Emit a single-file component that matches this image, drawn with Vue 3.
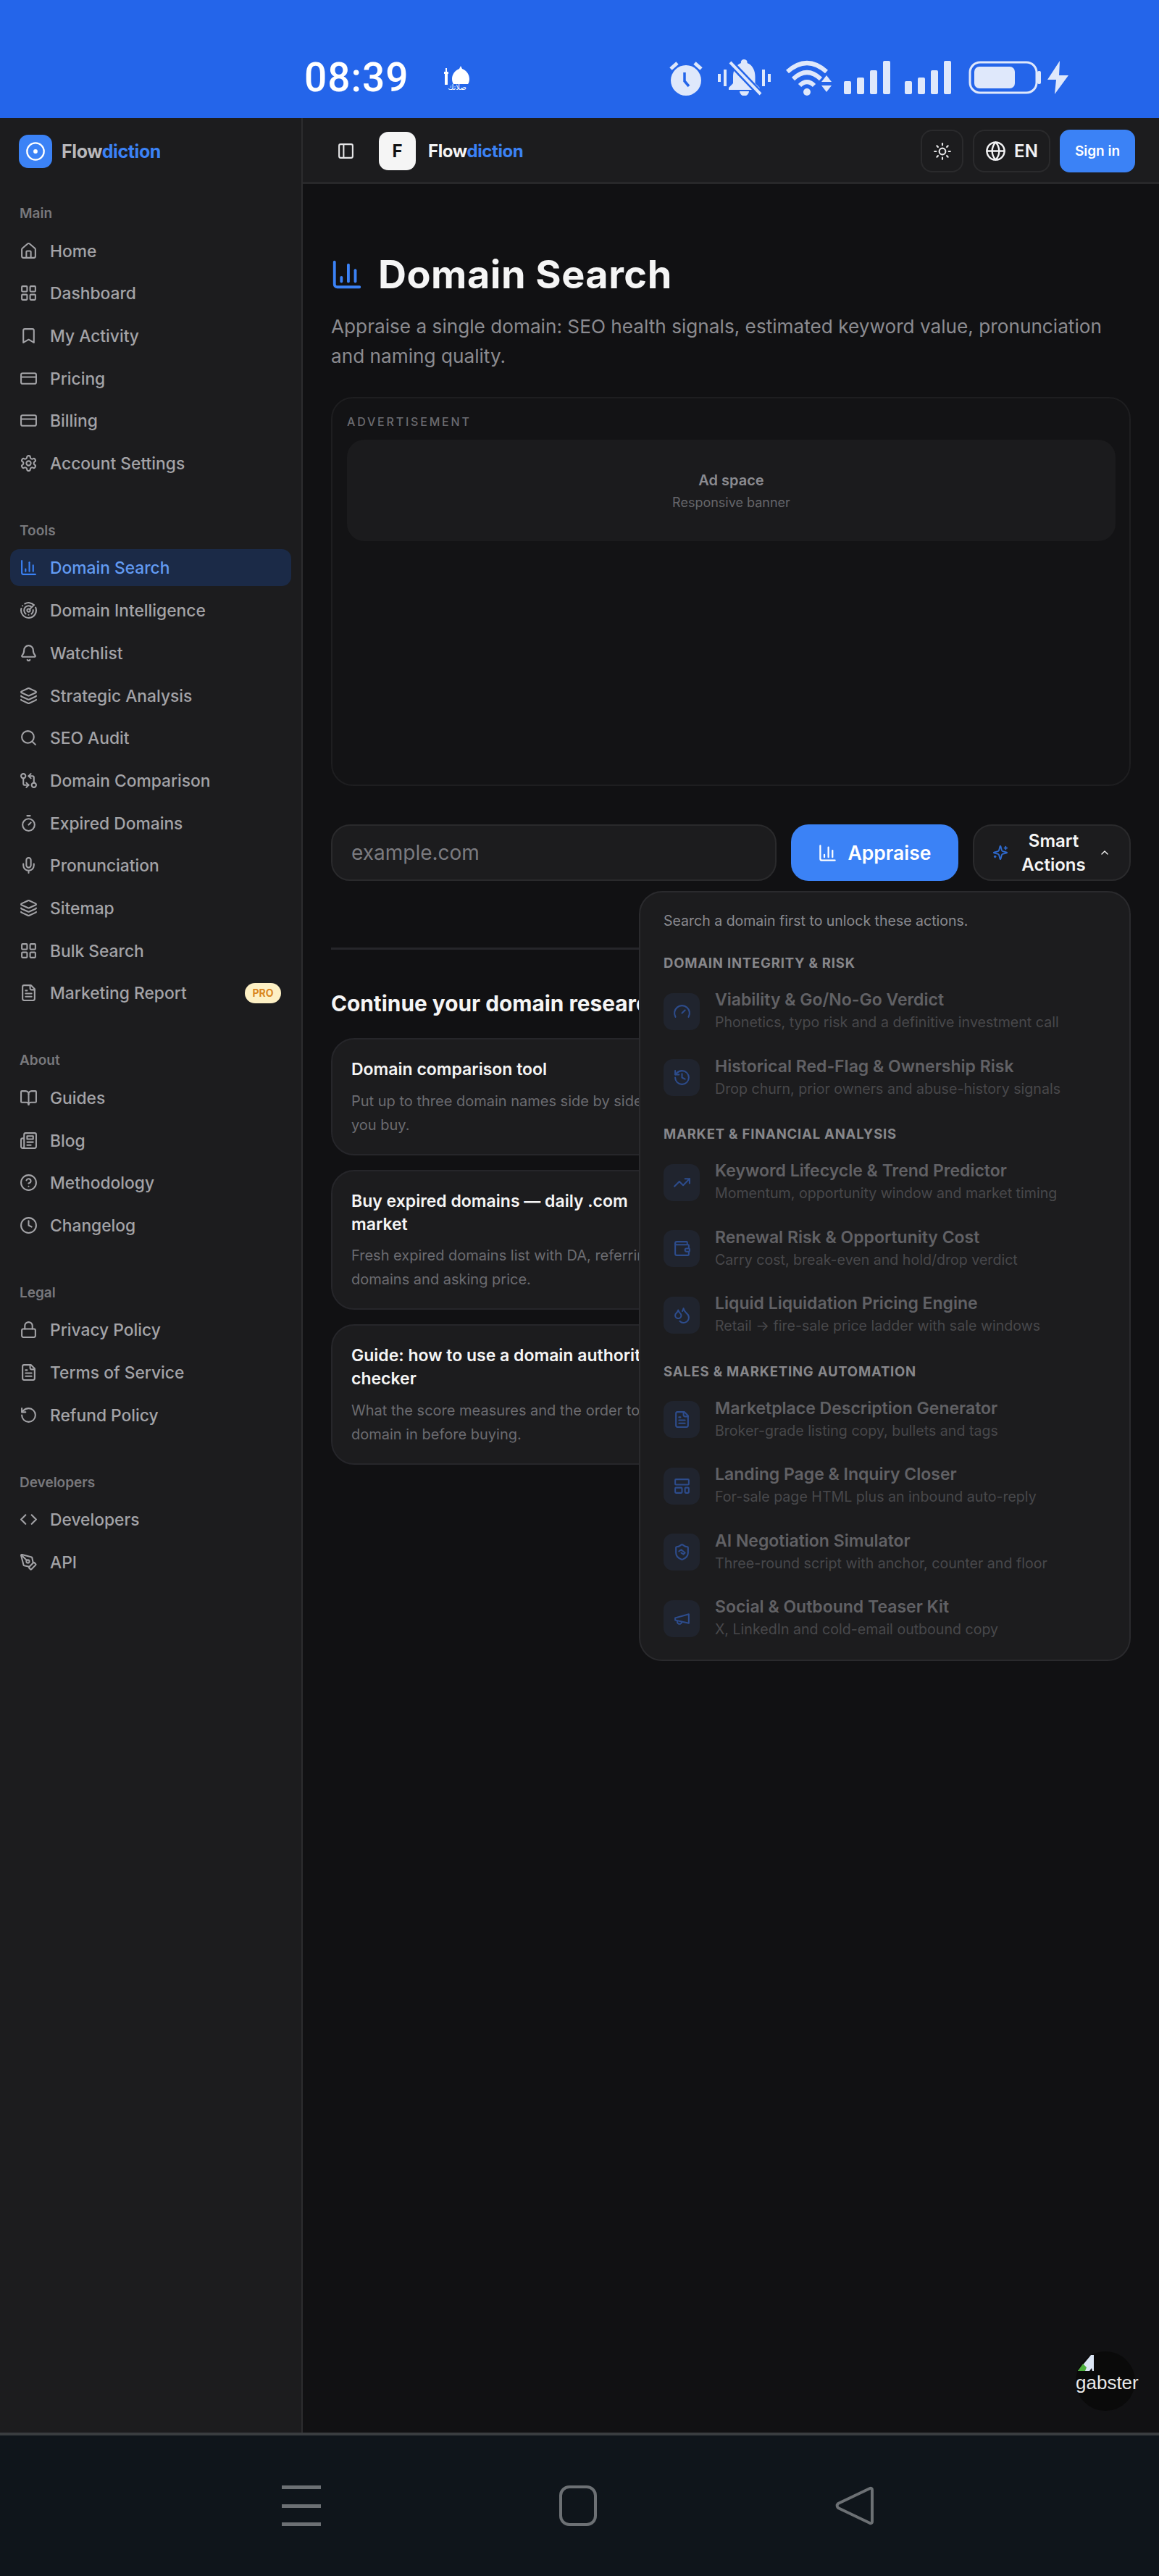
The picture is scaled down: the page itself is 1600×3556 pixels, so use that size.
<template>
  <div class="phone">
    <!-- android status bar -->
    <header class="statusbar">
      <span class="clock">08:39</span>
      <div class="mosque">
        <svg width="38" height="28" viewBox="0 0 38 28" fill="#fff">
          <path d="M4 0a3 3 0 0 0 1 5 3 3 0 0 1-1-5zM3 5h2v5h2v3H6v15H2V13H1v-3h2z" />
          <path d="M24 2l2 4c6 2 10 8 10 14 0 3-1 6-2 7H14c-1-1-2-4-2-7 0-6 4-12 10-14z" />
        </svg>
        <span class="mosque-text">صلاتك</span>
      </div>

      <div class="status-icons">
        <svg width="48" height="50" viewBox="0 0 48 50">
          <path d="M3 13l9-8M45 13l-9-8" stroke="#dfe8fb" stroke-width="5" />
          <circle cx="24" cy="29" r="21" fill="#dfe8fb" />
          <path d="M22 18v12l6 7" stroke="#2465ea" stroke-width="3.500" fill="none" />
        </svg>
        <svg width="73" height="50" viewBox="0 0 73 50" fill="#dfe8fb">
          <rect x="0" y="20" width="4" height="11" />
          <rect x="8" y="14" width="4" height="23" />
          <rect x="61" y="14" width="4" height="23" />
          <rect x="69" y="20" width="4" height="11" />
          <path d="M36.500 0a4 4 0 0 1 4 5c8 3 11 11 11 19v9l6 6v3H15v-3l6-6v-9c0-8 3-16 11-19a4 4 0 0 1 4.500-5z" />
          <path d="M30 44h13a6.500 6.500 0 0 1-13 0z" />
          <path d="M17 4l42 44" stroke="#2465ea" stroke-width="9" />
          <path d="M17 4l42 44" stroke="#dfe8fb" stroke-width="4" />
        </svg>
        <svg width="67" height="50" viewBox="0 0 67 50" fill="none">
          <g stroke="#dfe8fb" stroke-width="6">
            <path d="M3 17Q30 -7 57 17" />
            <path d="M11 27Q30 9 49 27" />
            <path d="M20 36Q30 26 40 36" />
          </g>
          <g fill="#dfe8fb">
            <circle cx="30" cy="45" r="5" />
            <path d="M50 31l7-9 7 9zM50 36h14l-7 9z" />
          </g>
        </svg>
        <svg v-for="n in 2" :key="n" :class="'signal-' + n" width="64" height="46" viewBox="0 0 64 46" fill="#dfe8fb">
          <rect x="0" y="28" width="10" height="18" rx="2" />
          <rect x="18" y="23" width="10" height="23" rx="2" />
          <rect x="36" y="13" width="10" height="33" rx="2" />
          <rect x="54" y="0" width="10" height="46" rx="2" />
        </svg>
        <svg class="battery" width="100" height="46" viewBox="0 0 100 46">
          <rect x="2" y="2" width="92" height="42" rx="14" fill="none" stroke="#dfe8fb" stroke-width="3" />
          <rect x="8" y="8" width="56" height="30" rx="7" fill="#dfe8fb" />
          <rect x="95" y="14" width="5" height="18" rx="2" fill="#dfe8fb" />
        </svg>
        <svg class="bolt" width="29" height="46" viewBox="0 0 29 46" fill="#dfe8fb">
          <path d="M17 0L0 26h12l-2 20 19-26H16z" />
        </svg>
      </div>
    </header>

    <div class="app">
      <aside class="sidebar">
        <div class="brand">
          <span class="brand-logo">
            <svg width="28" height="28" viewBox="0 0 24 24" fill="none" stroke="#fff" stroke-width="2">
              <circle cx="12" cy="12" r="10" />
              <circle cx="12" cy="12" r="1.500" fill="#fff" />
            </svg>
          </span>
          <span class="brand-name"><b>Flow</b><em>diction</em></span>
        </div>

        <section v-for="sec in navSections" :key="sec.label" class="nav-section">
          <div class="nav-label">{{ sec.label }}</div>
          <a
            v-for="item in sec.items"
            :key="item.text"
            class="nav-row"
            :class="{ active: item.active }"
          >
            <Icon :name="item.icon" :size="25" class="nav-icon" />
            <span>{{ item.text }}</span>
            <span v-if="item.pro" class="pro">PRO</span>
          </a>
        </section>
      </aside>

      <div class="content">
        <div class="topbar">
          <Icon name="panel" :size="25" class="panel-btn" />
          <span class="f-logo">F</span>
          <span class="topbar-name"><b>Flow</b><em>diction</em></span>
          <div class="topbar-right">
            <button class="ghost square"><Icon name="sun" :size="26" /></button>
            <button class="ghost lang"><Icon name="globe" :size="29" /><span>EN</span></button>
            <button class="signin">Sign in</button>
          </div>
        </div>

        <main class="page">
          <div class="title-row">
            <Icon name="chart" :size="46" class="title-icon" />
            <h1>Domain Search</h1>
          </div>
          <p class="lead">
            Appraise a single domain: SEO health signals, estimated keyword value, pronunciation and naming quality.
          </p>

          <div class="ad">
            <div class="ad-label">ADVERTISEMENT</div>
            <div class="ad-slot">
              <strong>Ad space</strong>
              <span>Responsive banner</span>
            </div>
          </div>

          <div class="search-row">
            <div class="input">example.com</div>
            <button class="appraise"><Icon name="chart" :size="27" />Appraise</button>
            <div class="smart-wrap">
              <button class="smart">
                <Icon name="sparkles" :size="22" class="smart-icon" />
                <span class="smart-label">Smart Actions</span>
                <Icon name="chevron" :size="16" class="smart-chev" />
              </button>

              <!-- dropdown stays open over the related cards -->
              <div class="dropdown">
                <p class="dd-intro">Search a domain first to unlock these actions.</p>
                <div v-for="group in actionGroups" :key="group.title" class="dd-group">
                  <div class="dd-head">{{ group.title }}</div>
                  <div v-for="a in group.items" :key="a.title" class="dd-item">
                    <span class="dd-tile"><Icon :name="a.icon" :size="25" /></span>
                    <div class="dd-text">
                      <div class="dd-title">{{ a.title }}</div>
                      <div class="dd-sub">{{ a.sub }}</div>
                    </div>
                  </div>
                </div>
              </div>
            </div>
          </div>

          <div class="divider"></div>

          <h2>Continue your domain research</h2>
          <div class="cards">
            <article v-for="c in related" :key="c.title" class="card">
              <h3>{{ c.title }}</h3>
              <p>{{ c.text }}</p>
            </article>
          </div>
        </main>
      </div>

      <!-- floating chat bubble, its image is broken in the reference -->
      <div class="gabster">
        <svg class="broken" width="24" height="24" viewBox="0 0 24 24">
          <path d="M1 23L19 1h4v22z" fill="#dce6f5" />
          <path d="M1 23l7-10 5 5-2 5z" fill="#4caf3c" />
          <path d="M17 23l3-4 1 4z" fill="#0a0a0a" />
        </svg>
        <span>gabster</span>
      </div>
    </div>

    <footer class="navbar">
      <div class="nav-menu"><i></i><i></i><i></i></div>
      <div class="nav-home"></div>
      <svg width="54" height="56" viewBox="0 0 54 56" fill="none">
        <path d="M48 4a2 2 0 0 1 3 2v44a2 2 0 0 1-3 2L4 31a4 4 0 0 1 0-6z" stroke="#6c7074" stroke-width="4" stroke-linejoin="round" />
      </svg>
    </footer>
  </div>
</template>

<script setup>
import { h } from "vue";

const circle = (cx, cy, r) => `M${cx - r} ${cy}a${r} ${r} 0 1 0 ${2 * r} 0a${r} ${r} 0 1 0 ${-2 * r} 0`;
const box = (x, y, w, h2, r) =>
  `M${x + r} ${y}h${w - 2 * r}a${r} ${r} 0 0 1 ${r} ${r}v${h2 - 2 * r}a${r} ${r} 0 0 1 ${-r} ${r}h${-(w - 2 * r)}a${r} ${r} 0 0 1 ${-r} ${-r}v${-(h2 - 2 * r)}a${r} ${r} 0 0 1 ${r} ${-r}z`;

const fileText = [
  "M15 2H6a2 2 0 0 0-2 2v16a2 2 0 0 0 2 2h12a2 2 0 0 0 2-2V7Z",
  "M14 2v4a2 2 0 0 0 2 2h4",
  "M10 9H8",
  "M16 13H8",
  "M16 17H8",
];
const layers = [
  "M12.830 2.180a2 2 0 0 0-1.660 0L2.600 6.080a1 1 0 0 0 0 1.830l8.580 3.910a2 2 0 0 0 1.660 0l8.580-3.900a1 1 0 0 0 0-1.830z",
  "M2 12a1 1 0 0 0 .580.910l8.600 3.910a2 2 0 0 0 1.650 0l8.580-3.900A1 1 0 0 0 22 12",
  "M2 17a1 1 0 0 0 .580.910l8.600 3.910a2 2 0 0 0 1.650 0l8.580-3.900A1 1 0 0 0 22 17",
];
const grid = [box(3, 3, 7, 7, 1), box(14, 3, 7, 7, 1), box(14, 14, 7, 7, 1), box(3, 14, 7, 7, 1)];
const card = [box(2, 5, 20, 14, 2), "M2 10h20"];

const iconPaths = {
  home: [
    "M15 21v-8a1 1 0 0 0-1-1h-4a1 1 0 0 0-1 1v8",
    "M3 10a2 2 0 0 1 .709-1.528l7-5.999a2 2 0 0 1 2.582 0l7 5.999A2 2 0 0 1 21 10v9a2 2 0 0 1-2 2H5a2 2 0 0 1-2-2z",
  ],
  grid,
  card,
  layers,
  file: fileText,
  bookmark: ["m19 21-7-4-7 4V5a2 2 0 0 1 2-2h10a2 2 0 0 1 2 2v16z"],
  settings: [
    "M12.220 2h-.440a2 2 0 0 0-2 2v.180a2 2 0 0 1-1 1.730l-.430.250a2 2 0 0 1-2 0l-.150-.080a2 2 0 0 0-2.730.730l-.220.380a2 2 0 0 0 .730 2.730l.150.100a2 2 0 0 1 1 1.720v.510a2 2 0 0 1-1 1.740l-.150.090a2 2 0 0 0-.730 2.730l.220.380a2 2 0 0 0 2.730.730l.150-.080a2 2 0 0 1 2 0l.430.250a2 2 0 0 1 1 1.730V20a2 2 0 0 0 2 2h.440a2 2 0 0 0 2-2v-.180a2 2 0 0 1 1-1.730l.430-.250a2 2 0 0 1 2 0l.150.080a2 2 0 0 0 2.730-.730l.220-.390a2 2 0 0 0-.730-2.730l-.150-.080a2 2 0 0 1-1-1.740v-.500a2 2 0 0 1 1-1.740l.150-.090a2 2 0 0 0 .730-2.730l-.220-.380a2 2 0 0 0-2.730-.730l-.150.080a2 2 0 0 1-2 0l-.430-.250a2 2 0 0 1-1-1.730V4a2 2 0 0 0-2-2z",
    circle(12, 12, 3),
  ],
  chart: ["M3 3v16a2 2 0 0 0 2 2h16", "M18 17V9", "M13 17V5", "M8 17v-3"],
  radar: [
    "M19.070 4.930A10 10 0 0 0 6.990 3.340",
    "M4 6h.010",
    "M2.290 9.620A10 10 0 1 0 21.310 8.350",
    "M16.240 7.760A6 6 0 1 0 8.230 16.670",
    "M12 18h.010",
    "M17.990 11.660A6 6 0 0 1 15.770 16.670",
    circle(12, 12, 2),
    "m13.410 10.590 5.660-5.660",
  ],
  bell: [
    "M10.268 21a2 2 0 0 0 3.464 0",
    "M3.262 15.326A1 1 0 0 0 4 17h16a1 1 0 0 0 .740-1.673C19.410 13.956 18 12.499 18 8A6 6 0 0 0 6 8c0 4.499-1.411 5.956-2.738 7.326",
  ],
  search: [circle(11, 11, 8), "m21 21-4.300-4.300"],
  compare: [
    circle(5, 6, 3),
    "M12 6h5a2 2 0 0 1 2 2v7",
    "m15 9-3-3 3-3",
    circle(19, 18, 3),
    "M12 18H7a2 2 0 0 1-2-2V9",
    "m9 15 3 3-3 3",
  ],
  timer: ["M10 2h4", "M12 14l3-3", circle(12, 14, 8)],
  mic: ["M12 2a3 3 0 0 0-3 3v7a3 3 0 0 0 6 0V5a3 3 0 0 0-3-3Z", "M19 10v2a7 7 0 0 1-14 0v-2", "M12 19v3"],
  book: [
    "M12 7v14",
    "M3 18a1 1 0 0 1-1-1V4a1 1 0 0 1 1-1h5a4 4 0 0 1 4 4 4 4 0 0 1 4-4h5a1 1 0 0 1 1 1v13a1 1 0 0 1-1 1h-6a3 3 0 0 0-3 3 3 3 0 0 0-3-3z",
  ],
  news: [
    "M4 22h16a2 2 0 0 0 2-2V4a2 2 0 0 0-2-2H8a2 2 0 0 0-2 2v16a2 2 0 0 1-2 2Zm0 0a2 2 0 0 1-2-2v-9c0-1.100.900-2 2-2h2",
    "M18 14h-8",
    "M15 18h-5",
    "M10 6h8v4h-8V6Z",
  ],
  help: [circle(12, 12, 10), "M9.090 9a3 3 0 0 1 5.830 1c0 2-3 3-3 3", "M12 17h.010"],
  clock: [circle(12, 12, 10), "M12 6v6l4 2"],
  lock: [box(3, 11, 18, 11, 2), "M7 11V7a5 5 0 0 1 10 0v4"],
  undo: ["M3 12a9 9 0 1 0 9-9 9.750 9.750 0 0 0-6.740 2.740L3 8", "M3 3v5h5"],
  code: ["m16 18 6-6-6-6", "m8 6-6 6 6 6"],
  pen: [
    "M15.707 21.293a1 1 0 0 1-1.414 0l-1.586-1.586a1 1 0 0 1 0-1.414l5.586-5.586a1 1 0 0 1 1.414 0l1.586 1.586a1 1 0 0 1 0 1.414z",
    "m18 13-1.375-6.874a1 1 0 0 0-.746-.776L3.235 2.028a1 1 0 0 0-1.207 1.207L5.350 15.879a1 1 0 0 0 .776.746L13 18",
    "m2.300 2.300 7.286 7.286",
    circle(11, 11, 2),
  ],
  panel: [box(3, 3, 18, 18, 2), "M9 3v18"],
  sun: [
    circle(12, 12, 4),
    "M12 2v2",
    "M12 20v2",
    "m4.930 4.930 1.410 1.410",
    "m17.660 17.660 1.410 1.410",
    "M2 12h2",
    "M20 12h2",
    "m6.340 17.660-1.410 1.410",
    "m19.070 4.930-1.410 1.410",
  ],
  globe: [circle(12, 12, 10), "M12 2a14.500 14.500 0 0 0 0 20 14.500 14.500 0 0 0 0-20", "M2 12h20"],
  sparkles: [
    "M9.937 15.500A2 2 0 0 0 8.500 14.063l-6.135-1.582a.500.500 0 0 1 0-.962L8.500 9.936A2 2 0 0 0 9.937 8.500l1.582-6.135a.500.500 0 0 1 .963 0L14.063 8.500A2 2 0 0 0 15.500 9.937l6.135 1.581a.500.500 0 0 1 0 .964L15.500 14.063a2 2 0 0 0-1.437 1.437l-1.582 6.135a.500.500 0 0 1-.963 0z",
    "M20 3v4",
    "M22 5h-4",
    "M4 17v2",
    "M5 18H3",
  ],
  chevron: ["m18 15-6-6-6 6"],
  gauge: ["m12 14 4-4", "M3.340 19a10 10 0 1 1 17.320 0"],
  history: ["M3 12a9 9 0 1 0 9-9 9.750 9.750 0 0 0-6.740 2.740L3 8", "M3 3v5h5", "M12 7v5l4 2"],
  trend: ["M16 7h6v6", "m22 7-8.500 8.500-5-5L2 17"],
  wallet: [
    "M19 7V4a1 1 0 0 0-1-1H5a2 2 0 0 0 0 4h15a1 1 0 0 1 1 1v4h-3a2 2 0 0 0 0 4h3a1 1 0 0 0 1-1v-2a1 1 0 0 0-1-1",
    "M3 5v14a2 2 0 0 0 2 2h15a1 1 0 0 0 1-1v-4",
  ],
  drops: [
    "M7 16.300c2.200 0 4-1.830 4-4.050 0-1.160-.570-2.260-1.710-3.190S7.290 6.750 7 5.300c-.290 1.450-1.140 2.840-2.290 3.760S3 11.100 3 12.250c0 2.220 1.800 4.050 4 4.050z",
    "M12.560 6.600A10.970 10.970 0 0 0 14 3.020c.500 2.500 2 4.900 4 6.500s3 3.500 3 5.500a6.980 6.980 0 0 1-11.910 4.970",
  ],
  template: [box(3, 3, 18, 7, 1), box(3, 14, 9, 7, 1), box(16, 14, 5, 7, 1)],
  shield: [
    "M20 13c0 5-3.500 7.500-7.660 8.950a1 1 0 0 1-.670-.010C7.500 20.500 4 18 4 13V6a1 1 0 0 1 1-1c2 0 4.500-1.200 6.240-2.720a1.170 1.170 0 0 1 1.520 0C14.510 3.810 17 5 19 5a1 1 0 0 1 1 1z",
    "M8 11l3-2 5 4-2 2-3-2",
  ],
  megaphone: ["m3 11 18-5v12L3 14v-3z", "M11.600 16.800a3 3 0 1 1-5.800-1.600"],
};

const Icon = (props) =>
  h(
    "svg",
    {
      width: props.size,
      height: props.size,
      viewBox: "0 0 24 24",
      fill: "none",
      stroke: "currentColor",
      "stroke-width": 2,
      "stroke-linecap": "round",
      "stroke-linejoin": "round",
    },
    iconPaths[props.name].map((d) => h("path", { d }))
  );

const navSections = [
  {
    label: "Main",
    items: [
      { text: "Home", icon: "home" },
      { text: "Dashboard", icon: "grid" },
      { text: "My Activity", icon: "bookmark" },
      { text: "Pricing", icon: "card" },
      { text: "Billing", icon: "card" },
      { text: "Account Settings", icon: "settings" },
    ],
  },
  {
    label: "Tools",
    items: [
      { text: "Domain Search", icon: "chart", active: true },
      { text: "Domain Intelligence", icon: "radar" },
      { text: "Watchlist", icon: "bell" },
      { text: "Strategic Analysis", icon: "layers" },
      { text: "SEO Audit", icon: "search" },
      { text: "Domain Comparison", icon: "compare" },
      { text: "Expired Domains", icon: "timer" },
      { text: "Pronunciation", icon: "mic" },
      { text: "Sitemap", icon: "layers" },
      { text: "Bulk Search", icon: "grid" },
      { text: "Marketing Report", icon: "file", pro: true },
    ],
  },
  {
    label: "About",
    items: [
      { text: "Guides", icon: "book" },
      { text: "Blog", icon: "news" },
      { text: "Methodology", icon: "help" },
      { text: "Changelog", icon: "clock" },
    ],
  },
  {
    label: "Legal",
    items: [
      { text: "Privacy Policy", icon: "lock" },
      { text: "Terms of Service", icon: "file" },
      { text: "Refund Policy", icon: "undo" },
    ],
  },
  {
    label: "Developers",
    items: [
      { text: "Developers", icon: "code" },
      { text: "API", icon: "pen" },
    ],
  },
];

const actionGroups = [
  {
    title: "DOMAIN INTEGRITY & RISK",
    items: [
      { title: "Viability & Go/No-Go Verdict", sub: "Phonetics, typo risk and a definitive investment call", icon: "gauge" },
      { title: "Historical Red-Flag & Ownership Risk", sub: "Drop churn, prior owners and abuse-history signals", icon: "history" },
    ],
  },
  {
    title: "MARKET & FINANCIAL ANALYSIS",
    items: [
      { title: "Keyword Lifecycle & Trend Predictor", sub: "Momentum, opportunity window and market timing", icon: "trend" },
      { title: "Renewal Risk & Opportunity Cost", sub: "Carry cost, break-even and hold/drop verdict", icon: "wallet" },
      { title: "Liquid Liquidation Pricing Engine", sub: "Retail → fire-sale price ladder with sale windows", icon: "drops" },
    ],
  },
  {
    title: "SALES & MARKETING AUTOMATION",
    items: [
      { title: "Marketplace Description Generator", sub: "Broker-grade listing copy, bullets and tags", icon: "file" },
      { title: "Landing Page & Inquiry Closer", sub: "For-sale page HTML plus an inbound auto-reply", icon: "template" },
      { title: "AI Negotiation Simulator", sub: "Three-round script with anchor, counter and floor", icon: "shield" },
      { title: "Social & Outbound Teaser Kit", sub: "X, LinkedIn and cold-email outbound copy", icon: "megaphone" },
    ],
  },
];

const related = [
  { title: "Domain comparison tool", text: "Put up to three domain names side by side before you buy." },
  { title: "Buy expired domains — daily .com market", text: "Fresh expired domains list with DA, referring domains and asking price." },
  { title: "Guide: how to use a domain authority checker", text: "What the score measures and the order to check a domain in before buying." },
];
</script>

<style>
body {
  margin: 0;
  background: #111113;
}
</style>

<style scoped>
.phone {
  width: 1600px;
  height: 3556px;
  display: flex;
  flex-direction: column;
  overflow: hidden;
  font-family: Inter, "Noto Sans", sans-serif;
  background: #111113;
}

/* status bar */
.statusbar {
  height: 163px;
  flex: none;
  background: #2465ea;
  display: flex;
  align-items: center;
  padding: 50px 125px 0 420px;
  box-sizing: border-box;
  color: #fff;
}
.clock {
  font-family: Roboto, Inter, sans-serif;
  font-size: 55px;
  font-weight: 500;
  width: 140px;
  letter-spacing: 1px;
}
.mosque {
  margin-left: 52px;
  display: flex;
  flex-direction: column;
  align-items: center;
}
.mosque-text {
  font-family: "DejaVu Sans", sans-serif;
  font-size: 10px;
  line-height: 9px;
  margin-top: -1px;
}
.status-icons {
  margin-left: auto;
  display: flex;
  align-items: center;
  gap: 20px;
}
.status-icons .signal-1 {
  margin-left: -6px;
}
.status-icons .battery {
  margin-left: 4px;
}
.status-icons .bolt {
  margin-left: -11px;
}

/* sidebar */
.app {
  flex: 1;
  display: flex;
  position: relative;
  min-height: 0;
}
.sidebar {
  width: 418px;
  flex: none;
  box-sizing: border-box;
  background: #1c1c1e;
  border-right: 2px solid #2c2c2e;
}
.brand {
  height: 91px;
  margin-bottom: 30px;
  display: flex;
  align-items: center;
  gap: 13px;
  padding-left: 26px;
}
.brand-logo {
  width: 46px;
  height: 46px;
  border-radius: 13px;
  background: #3b82f6;
  display: flex;
  align-items: center;
  justify-content: center;
}
.brand-name {
  font-size: 25px;
  letter-spacing: -0.4px;
  color: #b8b8bb;
}
.brand-name b,
.topbar-name b {
  font-weight: 700;
}
.brand-name em,
.topbar-name em {
  font-style: normal;
  font-weight: 700;
  color: #3b82f6;
}
.nav-section {
  margin: 0 0 57px;
}
.nav-label {
  height: 22px;
  line-height: 22px;
  margin: 0 0 14.500px 27px;
  font-size: 19px;
  font-weight: 600;
  color: #78787c;
}
.nav-row {
  height: 51px;
  margin: 0 14px 7.700px;
  padding: 0 14px 0 13px;
  box-sizing: border-box;
  display: flex;
  align-items: center;
  gap: 17px;
  border-radius: 13px;
  font-size: 22.800px;
  font-weight: 500;
  color: #a3a3a7;
}
.nav-icon {
  flex: none;
}
.nav-row.active {
  background: #1b2a47;
  color: #629bf3;
}
.nav-row.active .nav-icon {
  color: #3b82f6;
}
.pro {
  margin-left: auto;
  height: 28px;
  width: 50px;
  border-radius: 14px;
  background: #fdf0c4;
  color: #d9861f;
  font-size: 14px;
  font-weight: 700;
  line-height: 28px;
  text-align: center;
}

/* top bar */
.content {
  flex: 1;
  min-width: 0;
  display: flex;
  flex-direction: column;
}
.topbar {
  height: 91px;
  flex: none;
  box-sizing: border-box;
  background: #1c1c1e;
  border-bottom: 3px solid #28282a;
  display: flex;
  align-items: center;
  padding: 3px 33px 0 47px;
  color: #f2f2f4;
}
.panel-btn {
  color: #e6e6e8;
}
.f-logo {
  margin-left: 33px;
  width: 51px;
  height: 53px;
  border-radius: 13px;
  background: #f5f5f5;
  color: #111;
  font-weight: 700;
  font-size: 24px;
  display: flex;
  align-items: center;
  justify-content: center;
}
.topbar-name {
  margin-left: 17px;
  font-size: 24px;
  letter-spacing: -0.4px;
  color: #f5f5f5;
}
.topbar-right {
  margin-left: auto;
  display: flex;
  align-items: center;
  gap: 13px;
}
button {
  font-family: inherit;
  border: 0;
  padding: 0;
}
.ghost {
  height: 59px;
  background: transparent;
  border: 2px solid #2a2a2c;
  border-radius: 16px;
  color: #e6e6e8;
  display: flex;
  align-items: center;
  justify-content: center;
}
.square {
  width: 59px;
}
.lang {
  width: 107px;
  gap: 11px;
  font-size: 24px;
  font-weight: 600;
  color: #f2f2f4;
}
.signin {
  width: 104px;
  height: 59px;
  border-radius: 14px;
  background: #3b82f6;
  color: #fff;
  font-size: 19px;
  font-weight: 600;
}

/* main column */
.page {
  padding: 95px 39px 0 39px;
  flex: 1;
  color: #f5f5f5;
}
.title-row {
  display: flex;
  align-items: center;
  gap: 20px;
  height: 60px;
  margin-left: -1px;
}
.title-icon {
  color: #3b82f6;
}
h1 {
  margin: 0;
  font-size: 54px;
  font-weight: 700;
  line-height: 60px;
  letter-spacing: 0.500px;
}
.lead {
  margin: 20.500px 0 36.500px;
  font-size: 26.200px;
  line-height: 41px;
  color: #8b8b90;
}
.ad {
  height: 537px;
  box-sizing: border-box;
  border: 2px solid #1e1e20;
  border-radius: 30px;
  background: #131315;
  padding: 20px 19px 0 20px;
}
.ad-label {
  font-size: 16px;
  line-height: 24px;
  font-weight: 500;
  letter-spacing: 2.800px;
  color: #6b6b70;
}
.ad-slot {
  margin-top: 13px;
  height: 140px;
  border-radius: 24px;
  background: #1b1b1d;
  display: flex;
  flex-direction: column;
  align-items: center;
  justify-content: center;
  gap: 8px;
}
.ad-slot strong {
  font-size: 20px;
  font-weight: 600;
  color: #8b8b90;
}
.ad-slot span {
  font-size: 18px;
  color: #66666a;
}
.search-row {
  margin-top: 53px;
  height: 78px;
  display: flex;
  gap: 20px;
}
.input {
  width: 615px;
  box-sizing: border-box;
  padding-left: 26px;
  border: 2px solid #2a2a2c;
  border-radius: 26px;
  background: #1c1c1e;
  font-size: 28px;
  line-height: 74px;
  color: #7b7b80;
}
.appraise {
  width: 231px;
  border-radius: 24px;
  background: #3b82f6;
  color: #fff;
  font-size: 26.500px;
  font-weight: 600;
  display: flex;
  align-items: center;
  justify-content: center;
  gap: 14px;
}
.smart-wrap {
  position: relative;
  flex: 1;
}
.smart {
  width: 100%;
  height: 78px;
  box-sizing: border-box;
  border: 2px solid #2a2a2c;
  border-radius: 26px;
  background: #1c1c1e;
  color: #f5f5f5;
  display: flex;
  align-items: center;
  padding: 0 26px 0 25px;
}
.smart-icon {
  color: #2f6bd0;
  flex: none;
}
.smart-label {
  flex: 1;
  font-size: 24px;
  font-weight: 600;
  line-height: 33px;
  text-align: center;
  padding: 0 4px;
}
.smart-chev {
  flex: none;
}
.dropdown {
  position: absolute;
  top: 92px;
  right: 0;
  width: 679px;
  height: 1063px;
  box-sizing: border-box;
  z-index: 5;
  background: #1c1c1e;
  border: 2px solid #2a2a2d;
  border-radius: 32px;
  padding: 24px 32px 0;
}
.dd-intro {
  margin: 0 0 31px;
  font-size: 19.500px;
  line-height: 30px;
  color: #8b8b90;
}
.dd-group {
  margin-bottom: 34.500px;
}
.dd-head {
  height: 24px;
  line-height: 24px;
  margin-bottom: 24px;
  font-size: 18.500px;
  font-weight: 700;
  letter-spacing: 0.800px;
  color: #87878b;
}
.dd-item {
  height: 62px;
  margin-bottom: 29.500px;
  display: flex;
  align-items: center;
  gap: 21px;
}
.dd-item:last-child {
  margin-bottom: 0;
}
.dd-tile {
  width: 50px;
  height: 51px;
  border-radius: 13px;
  background: #20242e;
  color: #2d4c8c;
  display: flex;
  align-items: center;
  justify-content: center;
  flex: none;
}
.dd-title {
  font-size: 23px;
  font-weight: 600;
  line-height: 31px;
  color: #616165;
}
.dd-sub {
  font-size: 19.600px;
  line-height: 31px;
  color: #48484b;
}
.divider {
  margin-top: 92px;
  height: 3px;
  background: #26262a;
}
h2 {
  margin: 54px 0 28px;
  font-size: 29.800px;
  line-height: 40px;
  font-weight: 700;
  white-space: nowrap;
}
.cards {
  width: 540px;
  display: flex;
  flex-direction: column;
  gap: 20px;
}
.card {
  box-sizing: border-box;
  border: 2px solid #26262a;
  border-radius: 32px;
  background: #1c1c1e;
  padding: 25px 26px 23px;
}
.card h3 {
  margin: 0;
  max-width: 450px;
  font-size: 23px;
  line-height: 32px;
  font-weight: 600;
  color: #f5f5f5;
}
.card p {
  margin: 11.500px 0 0;
  font-size: 20px;
  line-height: 33px;
  color: #6b6b70;
}

/* chat bubble */
.gabster {
  position: absolute;
  left: 1485px;
  top: 3083px;
  width: 82px;
  height: 82px;
  border-radius: 50%;
  background: #0a0a0a;
  color: #e8e8e8;
}
.gabster .broken {
  position: absolute;
  left: 2px;
  top: 4px;
}
.gabster span {
  position: absolute;
  left: 0;
  top: 26px;
  font-family: "Liberation Sans", sans-serif;
  font-size: 26px;
  line-height: 34px;
}

/* android nav */
.navbar {
  height: 198px;
  flex: none;
  box-sizing: border-box;
  border-top: 4px solid #3a3d40;
  background: #0f151b;
  display: flex;
  align-items: center;
  justify-content: center;
  gap: 329px;
  padding-right: 4px;
}
.nav-menu {
  width: 54px;
  height: 56px;
  display: flex;
  flex-direction: column;
  justify-content: space-between;
}
.nav-menu i {
  height: 5px;
  background: #6c7074;
}
.nav-home {
  width: 52px;
  height: 56px;
  box-sizing: border-box;
  border: 4px solid #6c7074;
  border-radius: 14px;
}
</style>
